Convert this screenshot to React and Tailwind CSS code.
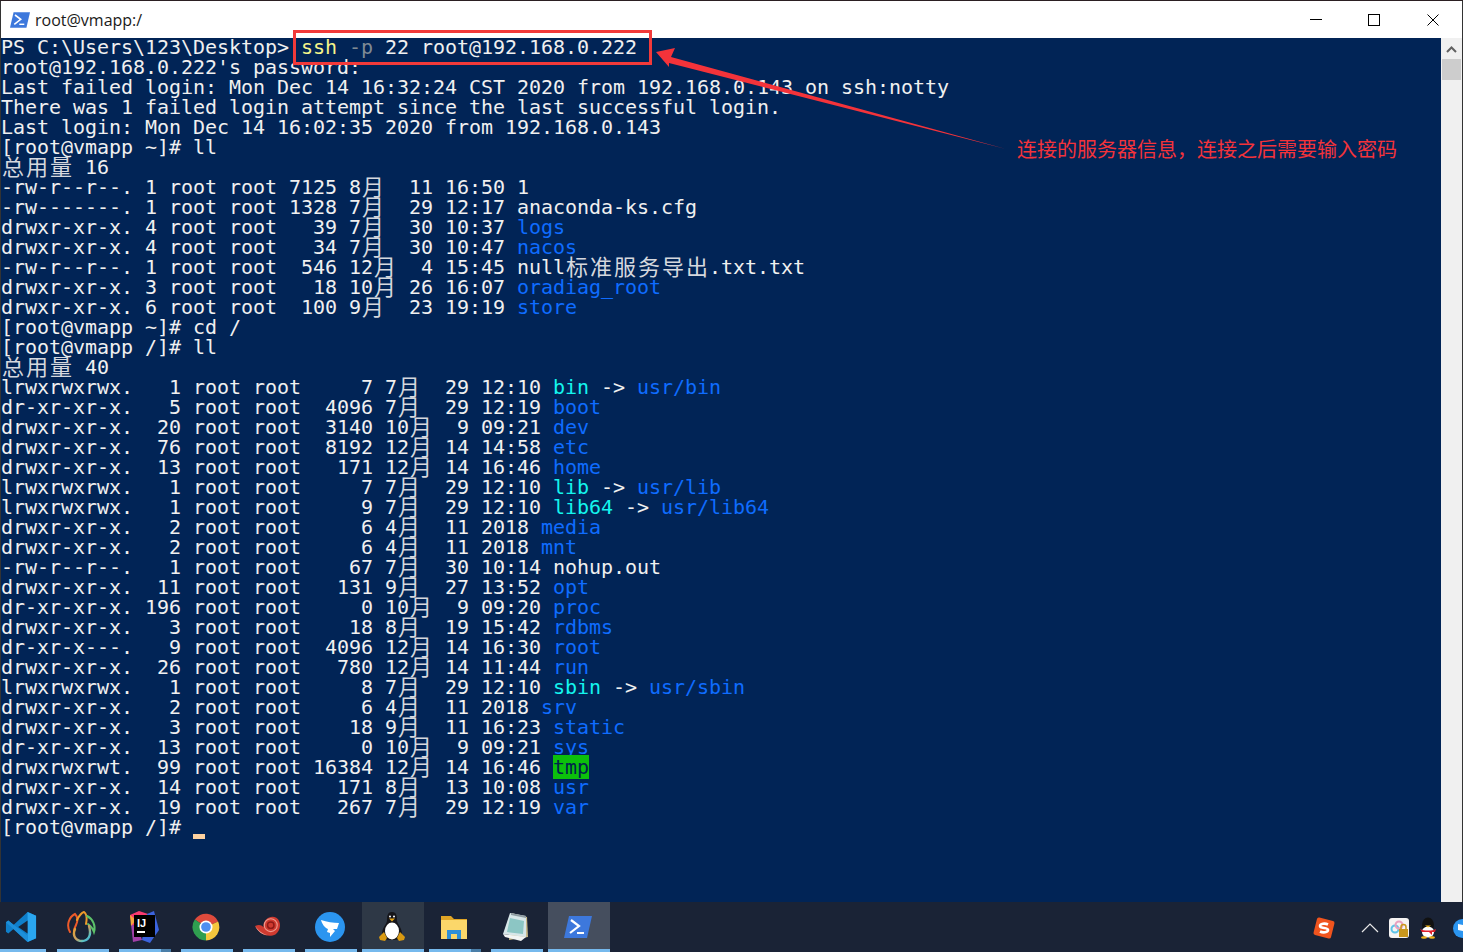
import React from 'react';

const BLUE = 'text-[#0f6cff]';
const CYAN = 'text-[#14f5ee]';

// each row: plain string, or list of [text, class]
const dir = (text, name) => [[text], [name, BLUE]];
const link = (text, name, target) => [[text], [name, CYAN], [' -> '], [target, BLUE]];

const rows = [
  [['PS C:\\Users\\123\\Desktop> '], ['ssh', 'text-[#f5f58a]'], [' -p', 'text-[#7f8a94]'], [' 22 root@192.168.0.222']],
  "root@192.168.0.222's password:",
  'Last failed login: Mon Dec 14 16:32:24 CST 2020 from 192.168.0.143 on ssh:notty',
  'There was 1 failed login attempt since the last successful login.',
  'Last login: Mon Dec 14 16:02:35 2020 from 192.168.0.143',
  '[root@vmapp ~]# ll',
  '总用量 16',
  '-rw-r--r--. 1 root root 7125 8月  11 16:50 1',
  '-rw-------. 1 root root 1328 7月  29 12:17 anaconda-ks.cfg',
  dir('drwxr-xr-x. 4 root root   39 7月  30 10:37 ', 'logs'),
  dir('drwxr-xr-x. 4 root root   34 7月  30 10:47 ', 'nacos'),
  '-rw-r--r--. 1 root root  546 12月  4 15:45 null标准服务导出.txt.txt',
  dir('drwxr-xr-x. 3 root root   18 10月 26 16:07 ', 'oradiag_root'),
  dir('drwxr-xr-x. 6 root root  100 9月  23 19:19 ', 'store'),
  '[root@vmapp ~]# cd /',
  '[root@vmapp /]# ll',
  '总用量 40',
  link('lrwxrwxrwx.   1 root root     7 7月  29 12:10 ', 'bin', 'usr/bin'),
  dir('dr-xr-xr-x.   5 root root  4096 7月  29 12:19 ', 'boot'),
  dir('drwxr-xr-x.  20 root root  3140 10月  9 09:21 ', 'dev'),
  dir('drwxr-xr-x.  76 root root  8192 12月 14 14:58 ', 'etc'),
  dir('drwxr-xr-x.  13 root root   171 12月 14 16:46 ', 'home'),
  link('lrwxrwxrwx.   1 root root     7 7月  29 12:10 ', 'lib', 'usr/lib'),
  link('lrwxrwxrwx.   1 root root     9 7月  29 12:10 ', 'lib64', 'usr/lib64'),
  dir('drwxr-xr-x.   2 root root     6 4月  11 2018 ', 'media'),
  dir('drwxr-xr-x.   2 root root     6 4月  11 2018 ', 'mnt'),
  '-rw-r--r--.   1 root root    67 7月  30 10:14 nohup.out',
  dir('drwxr-xr-x.  11 root root   131 9月  27 13:52 ', 'opt'),
  dir('dr-xr-xr-x. 196 root root     0 10月  9 09:20 ', 'proc'),
  dir('drwxr-xr-x.   3 root root    18 8月  19 15:42 ', 'rdbms'),
  dir('dr-xr-x---.   9 root root  4096 12月 14 16:30 ', 'root'),
  dir('drwxr-xr-x.  26 root root   780 12月 14 11:44 ', 'run'),
  link('lrwxrwxrwx.   1 root root     8 7月  29 12:10 ', 'sbin', 'usr/sbin'),
  dir('drwxr-xr-x.   2 root root     6 4月  11 2018 ', 'srv'),
  dir('drwxr-xr-x.   3 root root    18 9月  11 16:23 ', 'static'),
  dir('dr-xr-xr-x.  13 root root     0 10月  9 09:21 ', 'sys'),
  [['drwxrwxrwt.  99 root root 16384 12月 14 16:46 '], ['tmp', 'bg-[#0cc00c] text-[#00254b]']],
  dir('drwxr-xr-x.  14 root root   171 8月  13 10:08 ', 'usr'),
  dir('drwxr-xr-x.  19 root root   267 7月  29 12:19 ', 'var'),
];

// double-width cells for chinese chars, so the columns stay lined up
const Cells = ({ text }) =>
  text.split(/([\u4e00-\u9fff])/).map((part, i) =>
    /[\u4e00-\u9fff]/.test(part) ? (
      <span
        key={i}
        className="inline-block h-5 w-6 text-center align-top font-['Noto_Sans_CJK_SC',sans-serif] text-[22px] leading-[15px] tracking-normal text-[#d5d8de]"
      >
        {part}
      </span>
    ) : (
      part
    )
  );

const Row = ({ row }) => (
  <div className="h-5 whitespace-pre leading-[18px]">
    {typeof row === 'string' ? (
      <Cells text={row} />
    ) : (
      row.map(([text, cls], i) => (
        <span key={i} className={cls}>
          <Cells text={text} />
        </span>
      ))
    )}
  </div>
);

const VsCode = () => (
  <svg width="32" height="32" viewBox="0 0 34 34">
    <path d="M24 1 L33 5 V29 L24 33 L9 19 L3.5 24 L1 22 V12 L3.5 10 L9 15 Z" fill="#0f7fcb" />
    <path d="M24 1 L33 5 V29 L24 33 Z" fill="#2aa6f0" />
    <path d="M24 10 L14 17 L24 24 Z" fill="#1a2336" />
    <path d="M3.5 10 L24 26 V33 L1 12 Z" fill="#1d8fda" />
  </svg>
);

const Navicat = () => (
  <svg width="30" height="32" viewBox="0 0 30 32" fill="none" strokeWidth="2" strokeLinecap="round">
    <defs>
      <linearGradient id="navi" x1="0" y1="0" x2="1" y2="1">
        <stop offset="0" stopColor="#e8a22e" />
        <stop offset="0.5" stopColor="#c9a060" />
        <stop offset="0.8" stopColor="#58c3c5" />
        <stop offset="1" stopColor="#3f9be0" />
      </linearGradient>
    </defs>
    <path d="M3 21 C-1 14 2 6 8 3 C11 6 11 10 9 14 C8 16 7 18 7 20" stroke="#ee5a2a" />
    <path d="M10 9 C12 5 14 2 17 1 C20 3 20 8 19 13" stroke="#ee9a2a" />
    <path d="M20 5 C26 8 29 15 27 21 C26 18 24 15 21 13" stroke="#5cc26a" />
    <path d="M8 18 C5 25 9 30 15 30 C21 30 25 25 22 15" stroke="url(#navi)" strokeWidth="2.4" />
  </svg>
);

const Idea = () => (
  <svg width="32" height="34" viewBox="0 0 32 34">
    <path d="M2 5 L11 1 L20 4 L12 14 L4 16 Z" fill="#fb3a70" />
    <path d="M19 4 L26 1 L31 20 L22 33 L14 30 Z" fill="#3b63dd" />
    <path d="M3 14 L10 18 L14 30 L5 32 Z" fill="#a23fa9" />
    <path d="M2 5 L8 10 L3 16 Z" fill="#f6a53d" />
    <rect x="6" y="5" width="21" height="22" fill="#000" />
    <text x="9" y="17" fontFamily="'Liberation Sans',sans-serif" fontWeight="700" fontSize="11" fill="#fff">IJ</text>
    <rect x="9" y="21" width="8" height="2" fill="#fff" />
  </svg>
);

const Chrome = () => (
  <svg width="28" height="28" viewBox="0 0 30 30">
    <path d="M15 15 L3 7 A14.5 14.5 0 0 1 28 9 Z" fill="#de4a3c" />
    <path d="M15 15 L28 9 A14.5 14.5 0 0 1 15 29.5 Z" fill="#f5c73d" />
    <path d="M15 15 L15 29.5 A14.5 14.5 0 0 1 3 7 Z" fill="#2f9e50" />
    <circle cx="15" cy="15" r="7" fill="#fff" />
    <circle cx="15" cy="15" r="5.2" fill="#4f8ff0" />
  </svg>
);

const Snail = () => (
  <svg width="28" height="24" viewBox="0 0 30 26" fill="none">
    <path d="M1 12 C5 10 8 11 10 13 C10 4 18 0 24 3 C30 7 29 17 23 21 C17 24 7 23 1 12 Z" fill="#cf3a30" />
    <path d="M1 12 C5 17 9 21 15 22 C9 22 4 18 1 12 Z" fill="#f2a59b" />
    <circle cx="18" cy="11" r="7" stroke="#f09a8e" strokeWidth="1.2" />
    <circle cx="18" cy="11" r="3.5" stroke="#8e1a17" strokeWidth="1.6" />
  </svg>
);

const Ding = () => (
  <svg width="30" height="30" viewBox="0 0 30 30">
    <circle cx="15" cy="15" r="15" fill="#2b95f0" />
    <path d="M6 8 C12 10 18 11 24 11 L22 17 L18 17 L20 19 L15 25 L15 21 L12 20 L13 17 C10 16 7 12 6 8 Z" fill="#fff" />
  </svg>
);

const Tux = () => (
  <svg width="26" height="32" viewBox="0 0 26 32">
    <path d="M13 1 C8 1 8 6 8 10 C7 14 3 17 3 23 C3 27 7 29 13 29 C19 29 23 27 23 23 C23 17 19 14 18 10 C18 6 18 1 13 1 Z" fill="#15151a" />
    <ellipse cx="13" cy="20" rx="7" ry="8.5" fill="#fff" />
    <path d="M10 7.5 L16 7.5 L13 10.5 Z" fill="#e5a314" />
    <circle cx="11" cy="5.5" r="1" fill="#fff" />
    <circle cx="15" cy="5.5" r="1" fill="#fff" />
    <path d="M0 26 L5 21 L8 27 L6 30 L1 29 Z" fill="#d99a12" />
    <path d="M26 26 L21 21 L18 27 L20 30 L25 29 Z" fill="#d99a12" />
  </svg>
);

const Folder = () => (
  <svg width="28" height="28" viewBox="0 0 28 28">
    <path d="M1 3 H11 L14 6 H27 V13 H1 Z" fill="#e0a526" />
    <rect x="1" y="7" width="26" height="19" fill="#fbd76a" />
    <path d="M7 26 V17 H21 V26 H17 V21 H11 V26 Z" fill="#2e8fd8" />
  </svg>
);

const Notepad = () => (
  <svg width="28" height="30" viewBox="0 0 28 30">
    <path d="M9 1 L25 5 L26 25 L7 28 Z" fill="#c9b98a" />
    <path d="M8 1 L24 4 L24 25 L1 22 Z" fill="#d7e6e8" />
    <path d="M8 6 L22 9 L21 22 L5 20 Z" fill="#8cc6c4" />
    <path d="M1 22 L24 25 L19 29 L3 25 Z" fill="#f2f4f4" />
    <path d="M9 1 L24 4 L24 6 L9 3 Z" fill="#8d9aa0" />
  </svg>
);

const PsIcon = ({ size = 28 }) => (
  <svg width={size} height={size} viewBox="0 0 28 28">
    <path d="M5 3 H28 L23 25 H0 Z" fill="#3d78dc" />
    <path d="M7 7 L15 13 L6 20" fill="none" stroke="#fff" strokeWidth="2.2" />
    <rect x="13" y="19" width="7" height="2" fill="#fff" />
  </svg>
);

const Sogou = () => (
  <svg width="22" height="22" viewBox="0 0 22 22">
    <rect x="2" y="2" width="18" height="18" rx="2" fill="#f0541e" transform="rotate(14 11 11)" />
    <path d="M15 7.5 C12 6 7 6.5 7 9 C7 12 15 10 15 13 C15 15.5 10 16 7 14.5" fill="none" stroke="#fff" strokeWidth="2.6" />
  </svg>
);

const LockApp = () => (
  <svg width="20" height="20" viewBox="0 0 20 20">
    <rect width="20" height="20" rx="3" fill="#f5f3f3" />
    <circle cx="6" cy="11" r="3.5" fill="none" stroke="#5cc3e8" strokeWidth="2" />
    <circle cx="10" cy="7" r="3.5" fill="none" stroke="#e8a0c0" strokeWidth="2" />
    <rect x="10" y="11" width="9" height="8" fill="#c9971e" />
    <path d="M12 11 V9 A2.5 2.5 0 0 1 17 9 V11" fill="none" stroke="#c9971e" strokeWidth="1.5" />
  </svg>
);

const QQ = () => (
  <svg width="18" height="22" viewBox="0 0 18 22">
    <ellipse cx="9" cy="8" rx="6" ry="7.5" fill="#111" />
    <ellipse cx="9" cy="15" rx="6" ry="5.5" fill="#fff" />
    <path d="M1 12 C5 14 13 14 17 12 L16 15 L13 15 L13 18 L10 15 H3 Z" fill="#e0212c" />
    <path d="M6 8.5 H12 L9 10.5 Z" fill="#f3b51c" />
    <ellipse cx="5" cy="20.5" rx="3" ry="1.3" fill="#f3b51c" />
    <ellipse cx="13" cy="20.5" rx="3" ry="1.3" fill="#f3b51c" />
  </svg>
);

const apps = [
  { icon: <Navicat /> },
  { icon: <Idea />, stacked: true },
  { icon: <Chrome /> },
  { icon: <Snail /> },
  { icon: <Ding /> },
  { icon: <Tux />, bg: 'bg-[#2e3846]', active: true },
  { icon: <Folder />, stacked: true },
  { icon: <Notepad /> },
  { icon: <PsIcon />, bg: 'bg-[#454e5e]', active: true },
];

const TaskButton = ({ icon, bg, active, stacked }) => (
  <div className={`flex h-full w-[62px] flex-col ${bg || ''}`}>
    <div className="flex flex-1 items-center justify-center pr-[2px] pt-[3px]">{icon}</div>
    <div className={`flex h-[3px] ${active ? '' : 'mx-[5px]'}`}>
      <div className="flex-1 bg-[#76b9ed]" />
      {stacked && <div className="w-[10px] bg-[#4a7ea8]" />}
    </div>
  </div>
);

export default function App() {
  return (
    <div className="relative flex h-[952px] w-[1463px] flex-col overflow-hidden border-t border-[#2b1f22] bg-[#012456]">
      {/* barra de titulo */}
      <div className="flex h-[37px] shrink-0 items-center border-x border-[#333] bg-white pl-[9px] font-['Open_Sans',sans-serif] text-[16px] text-[#1a1a1a]">
        <PsIcon size={20} />
        <span className="ml-[5px]">root@vmapp:/</span>
        <div className="ml-auto flex items-center pr-[23px]">
          <div className="h-px w-3 bg-black" />
          <div className="ml-[46px] h-3 w-3 border border-black" />
          <svg className="ml-[47px]" width="12" height="12" viewBox="0 0 12 12">
            <path d="M0.5 0.5 L11.5 11.5 M11.5 0.5 L0.5 11.5" stroke="#000" />
          </svg>
        </div>
      </div>

      {/* terminal */}
      <div className="flex min-h-0 flex-1 border-l border-[#333]">
        <div className="flex-1 overflow-hidden font-['DejaVu_Sans_Mono',monospace] text-[20px] tracking-[-0.04px] text-[#f0f0f0]">
          {rows.map((row, i) => (
            <Row key={i} row={row} />
          ))}
          <div className="h-5 whitespace-pre leading-[18px]">
            [root@vmapp /]# <span className="inline-block h-[5px] w-3 bg-[#fdd2a0] align-[-5px]" />
          </div>
        </div>
        <div className="flex w-[21px] flex-col items-center bg-[#f0f0f0]">
          <svg className="mt-[7px]" width="11" height="8" viewBox="0 0 11 8">
            <path d="M1 7 L5.5 2.5 L10 7" fill="none" stroke="#606060" strokeWidth="2" />
          </svg>
          <div className="mt-[6px] h-[21px] w-[19px] bg-[#cdcdcd]" />
        </div>
        <div className="w-px bg-[#333]" />
      </div>

      {/* barra de tareas */}
      <div className="flex h-[50px] shrink-0 bg-[#1a2336]">
        <div className="flex h-full w-[52px] flex-col">
          <div className="flex flex-1 items-center justify-center pr-[10px] pt-[3px]">
            <VsCode />
          </div>
          <div className="mr-[6px] h-[3px] bg-[#76b9ed]" />
        </div>
        {apps.map((app, i) => (
          <TaskButton key={i} {...app} />
        ))}
        <div className="ml-auto flex items-center gap-[20px] pt-[2px]">
          <Sogou />
          <svg className="ml-[6px]" width="18" height="10" viewBox="0 0 18 10">
            <path d="M1 9 L9 1 L17 9" fill="none" stroke="#e8e8e8" strokeWidth="1.2" />
          </svg>
          <div className="-ml-[10px] flex items-center gap-[10px]">
            <LockApp />
            <QQ />
          </div>
          <div className="-ml-[4px] h-[19px] w-[10px] overflow-hidden">
            <div className="flex h-[19px] w-[19px] items-center justify-center rounded-full bg-[#2b95f0]">
              <div className="h-[6px] w-[10px] skew-y-12 bg-white" />
            </div>
          </div>
        </div>
      </div>

      {/* anotaciones de la captura */}
      <div className="absolute left-[293px] top-[29px] h-[35px] w-[359px] border-[3px] border-[#f23a3a]" />
      <svg className="pointer-events-none absolute left-0 top-0" width="1463" height="952" viewBox="0 0 1463 952">
        <polygon points="656,51 675,47 671,56 1006,148 669,62 669,66" fill="#f4333a" />
      </svg>
      <div className="absolute left-[1017px] top-[134px] font-['Noto_Sans_CJK_SC',sans-serif] text-[20px] leading-7 text-[#f4333a]">
        连接的服务器信息，连接之后需要输入密码
      </div>
    </div>
  );
}
